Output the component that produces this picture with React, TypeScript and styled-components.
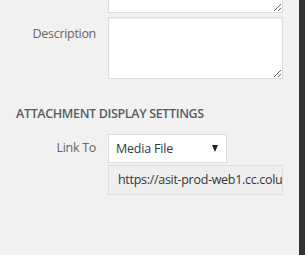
import React from 'react';
import styled, { createGlobalStyle } from 'styled-components';

const GlobalStyle = createGlobalStyle`
  html, body {
    margin: 0;
    padding: 0;
    background: #f1f1f1;
    font-family: "Open Sans", "Noto Sans", sans-serif;
  }
`;

const Frame = styled.div`
  display: flex;
  width: 305px;
  height: 255px;
  overflow: hidden;
`;

const Panel = styled.div`
  flex: 1;
  background: #f1f1f1;
`;

const Edge = styled.div`
  width: 6px;
  background: #333333;
`;

const Row = styled.div<{ $top?: number }>`
  display: grid;
  grid-template-columns: 96px 175px;
  column-gap: 12px;
  margin-top: ${(p) => p.$top ?? 0}px;
`;

const Label = styled.label<{ $pad?: number }>`
  text-align: right;
  font-size: 12.5px;
  letter-spacing: -0.3px;
  color: #666666;
  padding-top: ${(p) => p.$pad ?? 0}px;
  line-height: 18px;
`;

const TextArea = styled.textarea<{ $h: number; $shift?: number }>`
  box-sizing: border-box;
  width: 175px;
  height: ${(p) => p.$h}px;
  margin: ${(p) => -(p.$shift ?? 0)}px 0 0 0;
  border: 1px solid #dddddd;
  background: #ffffff;
  box-shadow: inset 0 1px 2px rgba(0, 0, 0, 0.07);
  font-family: inherit;
  display: block;
  resize: vertical;
  outline: none;
`;

const Heading = styled.h2`
  margin: 26px 0 0 16px;
  font-size: 12.5px;
  letter-spacing: -0.35px;
  font-weight: 600;
  color: #555d66;
  text-transform: uppercase;
  line-height: 18px;
`;

const Select = styled.div`
  box-sizing: border-box;
  width: 119px;
  height: 29px;
  border: 1px solid #dddddd;
  background: #ffffff;
  display: flex;
  align-items: center;
  justify-content: space-between;
  padding: 0 8px 0 7px;
  font-size: 12.5px;
  letter-spacing: -0.2px;
  color: #32373c;
`;

const Arrow = styled.span`
  width: 0;
  height: 0;
  border-left: 3.5px solid transparent;
  border-right: 3.5px solid transparent;
  border-top: 7px solid #222222;
`;

const UrlField = styled.div`
  box-sizing: border-box;
  width: 175px;
  height: 30px;
  margin-top: 2px;
  border: 1px solid #dddddd;
  background: #eeeeee;
  padding: 0 0 0 9px;
  font-size: 12.5px;
  letter-spacing: -0.3px;
  line-height: 28px;
  color: #32373c;
  white-space: nowrap;
  overflow: hidden;
`;

export default function App() {
  return (
    <Frame>
      <GlobalStyle />
      <Panel>
        <Row>
          <span />
          <TextArea $h={63} $shift={50} />
        </Row>
        <Row $top={4}>
          <Label $pad={8}>Description</Label>
          <TextArea $h={62} />
        </Row>
        <Heading>Attachment Display Settings</Heading>
        <Row $top={11}>
          <Label $pad={5}>Link To</Label>
          <Select>
            <span>Media File</span>
            <Arrow />
          </Select>
        </Row>
        <Row>
          <span />
          <UrlField>https://asit-prod-web1.cc.columbia.edu</UrlField>
        </Row>
      </Panel>
      <Edge />
    </Frame>
  );
}
